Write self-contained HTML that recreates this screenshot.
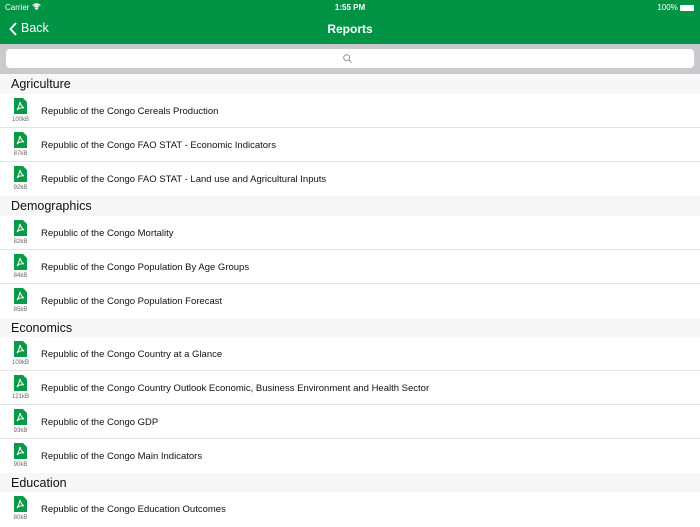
<!DOCTYPE html><html><head><style>
*{margin:0;padding:0;box-sizing:border-box}
body{width:700px;height:525px;overflow:hidden;background:#fff;font-family:"Liberation Sans",sans-serif;position:relative}
.top{position:absolute;left:0;top:0;width:700px;height:44px;background:#009444;color:#fff}
.sb{position:absolute;top:3px;font-size:8px}
.search{position:absolute;top:44px;left:0;width:700px;height:30px;background:#c9c9ce}
.field{position:absolute;left:6px;top:5px;width:688px;height:19px;background:#fff;border-radius:4px}
.hdr{height:20px;background:#f7f7f7;font-size:12.5px;padding-left:11px;line-height:21px;color:#111}
.row{height:34px;position:relative;border-bottom:1px solid #e3e3e6}
.row .ic{position:absolute;left:14px;top:4px}
.row .kb{position:absolute;left:0;width:41px;text-align:center;top:23px;font-size:6px;color:#666}
.row .t{position:absolute;left:41px;top:1px;line-height:34px;font-size:9.5px;color:#111}
</style></head><body>
<div class="top">
<div class="sb" style="left:5px">Carrier <svg width="9" height="7" viewBox="0 0 9 7"><path d="M0.5 2.5Q4.5-1 8.5 2.5M2 4Q4.5 2 7 4M4.5 6.5L3.3 5.2Q4.5 4.3 5.7 5.2Z" stroke="#fff" fill="#fff" stroke-width="1"/></svg></div>
<div class="sb" style="left:0;width:700px;text-align:center;font-weight:bold">1:55 PM</div>
<div class="sb" style="right:6px">100% <span style="display:inline-block;width:14px;height:6px;background:#fff;border-radius:1px;vertical-align:-1px"></span></div>
<svg style="position:absolute;left:9px;top:22px" width="8" height="14" viewBox="0 0 8 14"><path d="M7 1L1.5 7L7 13" stroke="#fff" stroke-width="2" fill="none"/></svg>
<div style="position:absolute;left:21px;top:21px;font-size:12.5px">Back</div>
<div style="position:absolute;left:0;width:700px;text-align:center;top:22px;font-size:12px;font-weight:bold">Reports</div>
</div>
<div class="search"><div class="field"><svg style="position:absolute;left:337px;top:5px" width="9" height="9" viewBox="0 0 9 9"><circle cx="3.7" cy="3.7" r="3" stroke="#8e8e93" fill="none"/><path d="M6 6L8.5 8.5" stroke="#8e8e93"/></svg></div></div>
<div style="position:absolute;top:74px;left:0;width:700px">
<div class="hdr">Agriculture</div>
<div class="row"><svg class="ic" width="13" height="16"><path d="M0 0H9L13 4V16H0Z" fill="#0a9a47"/><path d="M6 4Q7 8 10 10Q6 9 3 12Q5 9 6 4Z" stroke="#fff" fill="none" stroke-width="1"/></svg><div class="kb">100kB</div><div class="t">Republic of the Congo Cereals Production</div></div>
<div class="row"><svg class="ic" width="13" height="16"><path d="M0 0H9L13 4V16H0Z" fill="#0a9a47"/><path d="M6 4Q7 8 10 10Q6 9 3 12Q5 9 6 4Z" stroke="#fff" fill="none" stroke-width="1"/></svg><div class="kb">87kB</div><div class="t">Republic of the Congo FAO STAT - Economic Indicators</div></div>
<div class="row" style="border:0"><svg class="ic" width="13" height="16"><path d="M0 0H9L13 4V16H0Z" fill="#0a9a47"/><path d="M6 4Q7 8 10 10Q6 9 3 12Q5 9 6 4Z" stroke="#fff" fill="none" stroke-width="1"/></svg><div class="kb">92kB</div><div class="t">Republic of the Congo FAO STAT - Land use and Agricultural Inputs</div></div>
<div class="hdr">Demographics</div>
<div class="row"><svg class="ic" width="13" height="16"><path d="M0 0H9L13 4V16H0Z" fill="#0a9a47"/><path d="M6 4Q7 8 10 10Q6 9 3 12Q5 9 6 4Z" stroke="#fff" fill="none" stroke-width="1"/></svg><div class="kb">82kB</div><div class="t">Republic of the Congo Mortality</div></div>
<div class="row"><svg class="ic" width="13" height="16"><path d="M0 0H9L13 4V16H0Z" fill="#0a9a47"/><path d="M6 4Q7 8 10 10Q6 9 3 12Q5 9 6 4Z" stroke="#fff" fill="none" stroke-width="1"/></svg><div class="kb">84kB</div><div class="t">Republic of the Congo Population By Age Groups</div></div>
<div class="row" style="border:0"><svg class="ic" width="13" height="16"><path d="M0 0H9L13 4V16H0Z" fill="#0a9a47"/><path d="M6 4Q7 8 10 10Q6 9 3 12Q5 9 6 4Z" stroke="#fff" fill="none" stroke-width="1"/></svg><div class="kb">85kB</div><div class="t">Republic of the Congo Population Forecast</div></div>
<div class="hdr" style="height:19px;line-height:20px">Economics</div>
<div class="row"><svg class="ic" width="13" height="16"><path d="M0 0H9L13 4V16H0Z" fill="#0a9a47"/><path d="M6 4Q7 8 10 10Q6 9 3 12Q5 9 6 4Z" stroke="#fff" fill="none" stroke-width="1"/></svg><div class="kb">109kB</div><div class="t">Republic of the Congo Country at a Glance</div></div>
<div class="row"><svg class="ic" width="13" height="16"><path d="M0 0H9L13 4V16H0Z" fill="#0a9a47"/><path d="M6 4Q7 8 10 10Q6 9 3 12Q5 9 6 4Z" stroke="#fff" fill="none" stroke-width="1"/></svg><div class="kb">121kB</div><div class="t">Republic of the Congo Country Outlook Economic, Business Environment and Health Sector</div></div>
<div class="row"><svg class="ic" width="13" height="16"><path d="M0 0H9L13 4V16H0Z" fill="#0a9a47"/><path d="M6 4Q7 8 10 10Q6 9 3 12Q5 9 6 4Z" stroke="#fff" fill="none" stroke-width="1"/></svg><div class="kb">93kB</div><div class="t">Republic of the Congo GDP</div></div>
<div class="row" style="border:0"><svg class="ic" width="13" height="16"><path d="M0 0H9L13 4V16H0Z" fill="#0a9a47"/><path d="M6 4Q7 8 10 10Q6 9 3 12Q5 9 6 4Z" stroke="#fff" fill="none" stroke-width="1"/></svg><div class="kb">90kB</div><div class="t">Republic of the Congo Main Indicators</div></div>
<div class="hdr" style="height:19px;line-height:20px">Education</div>
<div class="row" style="border:0"><svg class="ic" width="13" height="16"><path d="M0 0H9L13 4V16H0Z" fill="#0a9a47"/><path d="M6 4Q7 8 10 10Q6 9 3 12Q5 9 6 4Z" stroke="#fff" fill="none" stroke-width="1"/></svg><div class="kb">80kB</div><div class="t">Republic of the Congo Education Outcomes</div></div>
</div>
</body></html>
